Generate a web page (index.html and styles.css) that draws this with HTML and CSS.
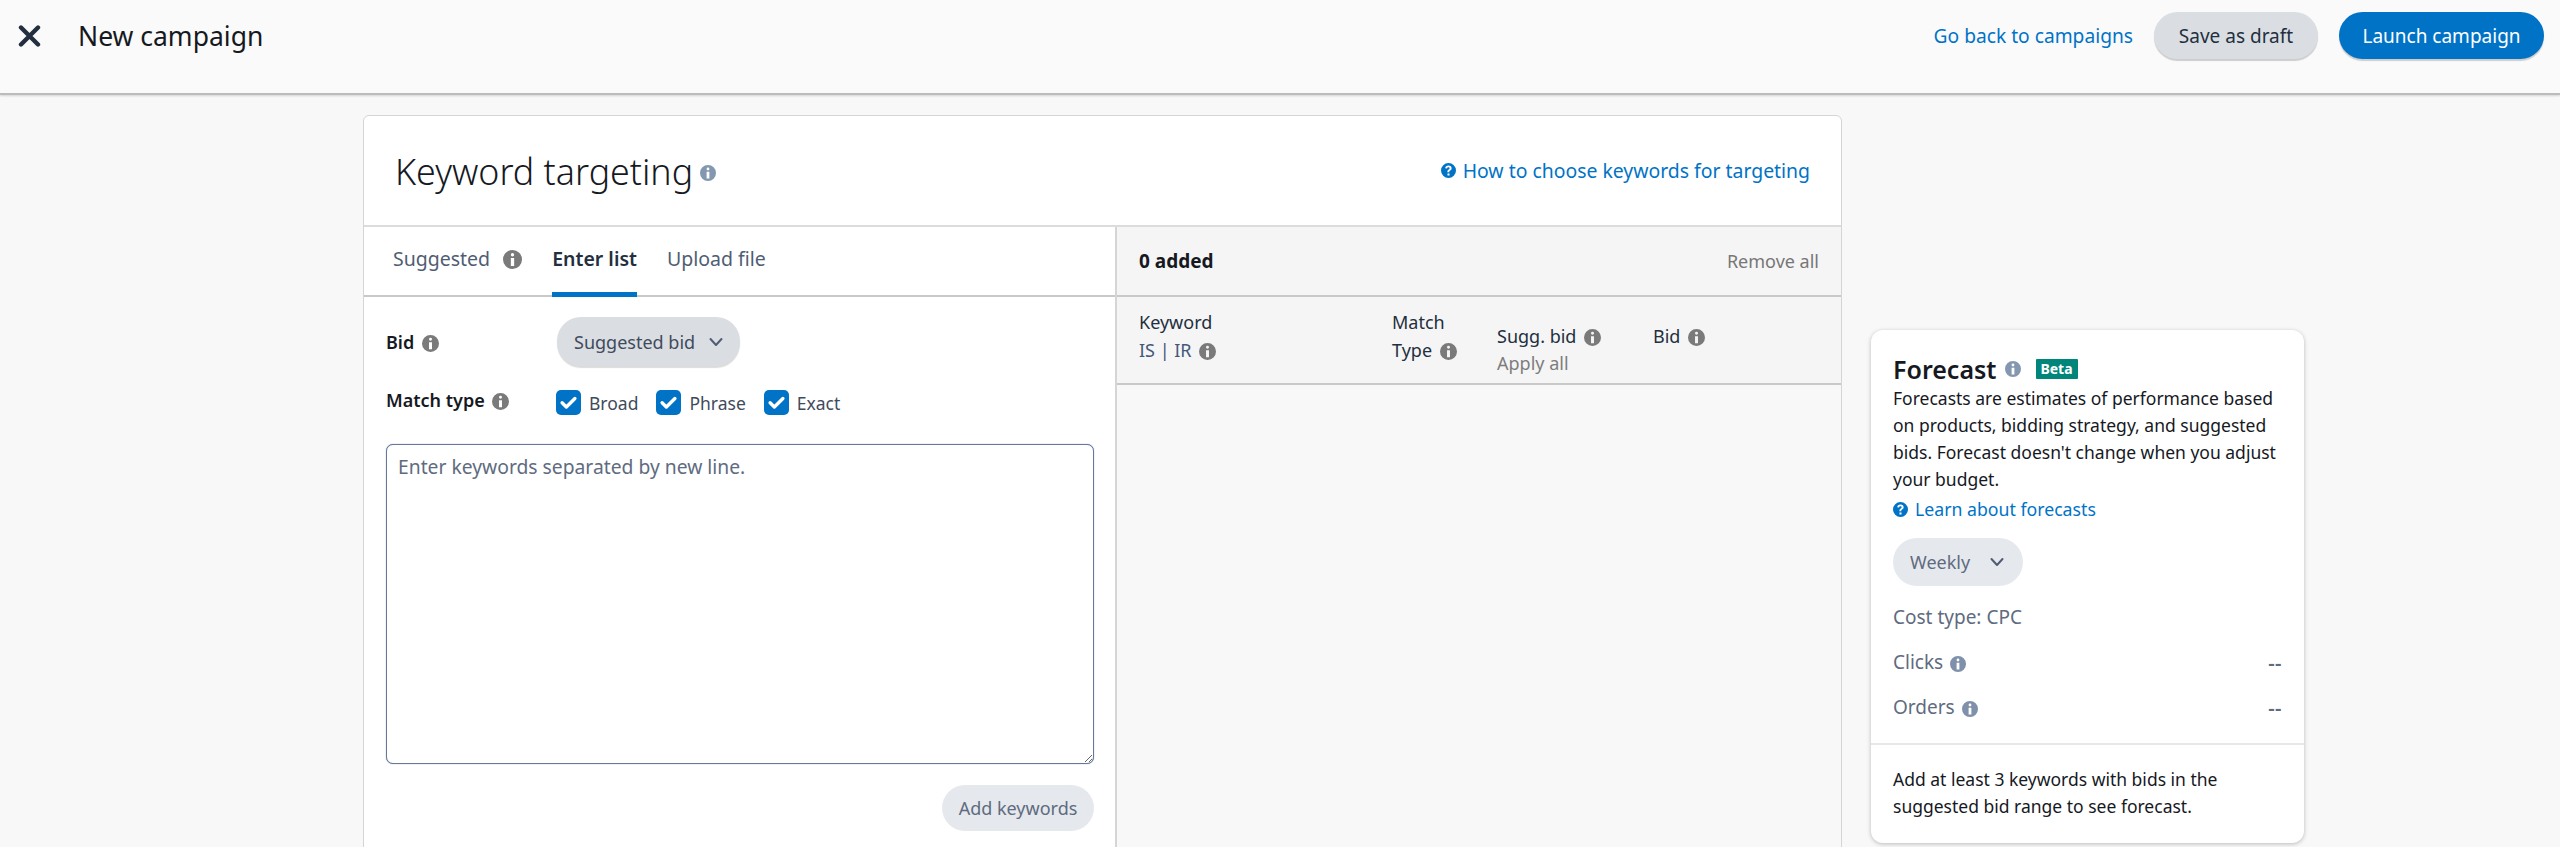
FILE: index.html
```html
<!DOCTYPE html>
<html lang="en">
<head>
<meta charset="utf-8">
<title>New campaign</title>
<link rel="stylesheet" href="styles.css">
</head>
<body>
<svg class="defs" width="0" height="0" aria-hidden="true">
  <symbol id="info" viewBox="0 0 16 16">
    <path fill="currentColor" fill-rule="evenodd" d="M8 0a8 8 0 1 1 0 16A8 8 0 0 1 8 0zM8 2.6a1.4 1.4 0 1 0 0 2.8 1.4 1.4 0 0 0 0-2.8zM6.6 6.8v6.6h2.8V6.8z"/>
  </symbol>
  <symbol id="help" viewBox="0 0 16 16">
    <path fill="currentColor" fill-rule="evenodd" d="M8 0a8 8 0 1 1 0 16A8 8 0 0 1 8 0zM6.9 11.2v2.2h2.2v-2.2zM8 2.6c-2 0-3.3 1.1-3.5 3l2 .3c.1-.9.6-1.4 1.4-1.4.8 0 1.3.4 1.3 1.1 0 .6-.3.9-1 1.4-.9.6-1.4 1.2-1.4 2.3v.5h2v-.3c0-.6.2-.9.9-1.4 1-.7 1.6-1.4 1.6-2.6 0-1.8-1.2-2.9-3.3-2.9z"/>
  </symbol>
  <symbol id="chev" viewBox="0 0 16 16">
    <path fill="none" stroke="currentColor" stroke-width="2" stroke-linecap="round" stroke-linejoin="round" d="M2.5 5l5.5 6 5.5-6"/>
  </symbol>
  <symbol id="check" viewBox="0 0 16 16">
    <path fill="none" stroke="#fff" stroke-width="2.8" stroke-linecap="round" stroke-linejoin="round" d="M2.6 8.2l3.6 3.6L13.4 4.6"/>
  </symbol>
</svg>

<header class="topbar">
  <div class="topbar-left">
    <svg class="close" viewBox="0 0 22 22" aria-hidden="true"><path d="M2.5 2.5l17 17M19.5 2.5l-17 17" fill="none" stroke="#232f3e" stroke-width="4.4" stroke-linecap="round"/></svg>
    <span class="topbar-title">New campaign</span>
  </div>
  <div class="topbar-right">
    <a class="link back-link">Go back to campaigns</a>
    <button class="btn btn-grey">Save as draft</button>
    <button class="btn btn-blue">Launch campaign</button>
  </div>
</header>

<main class="page">
  <section class="card">
    <div class="card-head">
      <div class="heading">
        <h1>Keyword targeting</h1>
        <svg class="ic ic-head"><use href="#info"/></svg>
      </div>
      <a class="link help-link"><svg class="ic ic-help"><use href="#help"/></svg>How to choose keywords for targeting</a>
    </div>
    <div class="columns">
      <div class="col-left">
        <nav class="tabs">
          <span class="tab">Suggested <svg class="ic ic-tab"><use href="#info"/></svg></span>
          <span class="tab tab-active">Enter list</span>
          <span class="tab">Upload file</span>
        </nav>
        <div class="form">
          <div class="form-row row-bid">
            <div class="form-label">Bid <svg class="ic ic-grey"><use href="#info"/></svg></div>
            <button class="select select-bid">Suggested bid <svg class="chev"><use href="#chev"/></svg></button>
          </div>
          <div class="form-row row-match">
            <div class="form-label">Match type <svg class="ic ic-grey"><use href="#info"/></svg></div>
            <div class="checks">
              <label class="check"><svg class="box" viewBox="0 0 16 16"><use href="#check"/></svg>Broad</label>
              <label class="check"><svg class="box" viewBox="0 0 16 16"><use href="#check"/></svg>Phrase</label>
              <label class="check"><svg class="box" viewBox="0 0 16 16"><use href="#check"/></svg>Exact</label>
            </div>
          </div>
          <textarea class="keywords" placeholder="Enter keywords separated by new line."></textarea>
          <div class="form-foot"><button class="btn-add">Add keywords</button></div>
        </div>
      </div>
      <div class="col-right">
        <div class="added">
          <strong>0 added</strong>
          <span class="remove">Remove all</span>
        </div>
        <div class="thead">
          <div class="th th-keyword"><div>Keyword</div><div class="sub-blue">IS | IR <svg class="ic ic-grey"><use href="#info"/></svg></div></div>
          <div class="th th-match"><div>Match</div><div>Type <svg class="ic ic-grey"><use href="#info"/></svg></div></div>
          <div class="th th-sugg"><div>Sugg. bid <svg class="ic ic-grey"><use href="#info"/></svg></div><div class="sub-grey">Apply all</div></div>
          <div class="th th-bid"><div>Bid <svg class="ic ic-grey"><use href="#info"/></svg></div></div>
        </div>
        <div class="tbody"></div>
      </div>
    </div>
  </section>

  <aside class="forecast">
    <div class="fc-body">
      <div class="fc-title">
        <h2>Forecast</h2>
        <svg class="ic ic-fc-title"><use href="#info"/></svg>
        <span class="beta">Beta</span>
      </div>
      <p class="fc-text">Forecasts are estimates of performance based on products, bidding strategy, and suggested bids. Forecast doesn't change when you adjust your budget.</p>
      <a class="link fc-learn"><svg class="ic ic-learn"><use href="#help"/></svg>Learn about forecasts</a>
      <button class="select select-weekly">Weekly <svg class="chev"><use href="#chev"/></svg></button>
      <div class="fc-line fc-cost">Cost type: CPC</div>
      <div class="fc-line fc-metric"><span>Clicks <svg class="ic ic-fc"><use href="#info"/></svg></span><span class="dash">--</span></div>
      <div class="fc-line fc-metric"><span>Orders <svg class="ic ic-fc"><use href="#info"/></svg></span><span class="dash">--</span></div>
    </div>
    <p class="fc-foot">Add at least 3 keywords with bids in the suggested bid range to see forecast.</p>
  </aside>
</main>
</body>
</html>
```

FILE: styles.css
```css
* { box-sizing: border-box; }
html, body { margin: 0; padding: 0; }
body {
  height: 847px;
  overflow: hidden;
  background: #f8f8f8;
  font-family: "Noto Sans", "Open Sans", sans-serif;
  color: #16191f;
  font-size: 19px;
}
.defs { position: absolute; }
button { font-family: inherit; border: 0; cursor: pointer; }
h1, h2, p { margin: 0; font-weight: inherit; }
.ic { display: inline-block; vertical-align: -2px; }
.link { color: #0073c7; text-decoration: none; }

.topbar {
  height: 95px;
  padding: 12px 16px 0 18px;
  display: flex;
  justify-content: space-between;
  align-items: flex-start;
  background: #fafafa;
  border-bottom: 2px solid #bcbcbc;
  box-shadow: 0 1px 2px rgba(0,0,0,.15);
}
.topbar-left { display: flex; align-items: center; height: 47px; gap: 37px; }
.close { width: 23px; height: 22px; }
.topbar-title { font-size: 26.5px; color: #16191f; }
.topbar-right { display: flex; align-items: center; height: 47px; }
.back-link { font-size: 19.2px; margin-right: 21px; }
.btn {
  height: 47px;
  border-radius: 24px;
  font-size: 19px;
  padding: 0;
  box-shadow: 0 2px 1px rgba(0,0,0,.18);
}
.btn-grey { width: 164px; background: #dadee3; color: #232f3e; margin-right: 21px; }
.btn-blue { width: 205px; background: #0073c7; color: #fff; }

.page {
  display: flex;
  align-items: flex-start;
  height: 752px;
  overflow: hidden;
  padding: 20px 0 0 363px;
}
.card {
  width: 1479px;
  height: 800px;
  flex: none;
  background: #fff;
  border: 1px solid #d5d5d5;
  border-radius: 6px;
}
.card-head {
  height: 111px;
  padding: 0 31px 0 31px;
  display: flex;
  justify-content: space-between;
  align-items: center;
  border-bottom: 2px solid #dcdcdc;
}
.heading { display: flex; align-items: center; gap: 7px; }
.heading h1 { font-size: 35.8px; font-weight: 300; color: #16191f; }
.ic-head { width: 16px; height: 16px; color: #8497b0; margin-top: 4px; }
.help-link { font-size: 19.4px; display: flex; align-items: center; gap: 7px; }
.ic-help { width: 15px; height: 15px; }

.columns { display: flex; height: 690px; }
.col-left { width: 753px; border-right: 2px solid #d5d5d5; }
.col-right { flex: 1; background: #f8f8f8; }

.tabs {
  height: 70px;
  padding: 0 0 0 29px;
  display: flex;
  gap: 30px;
  border-bottom: 2px solid #c9c9c9;
}
.tab { height: 70px; line-height: 63px; font-size: 19.5px; color: #4f5d73; flex: none; }
.ic-tab { width: 19px; height: 19px; margin-left: 8px; color: #7a7a7a; vertical-align: -3px; }
.tab-active { font-weight: 600; color: #232f3e; border-bottom: 5px solid #0073c7; height: 70px; }

.form { padding: 20px 21px 0 22px; }
.form-row { display: flex; align-items: center; }
.row-bid { height: 49px; }
.row-match { margin-top: 16px; height: 36px; }
.form-label { width: 171px; font-size: 18px; font-weight: 600; color: #16191f; flex: none; }
.ic-grey { width: 17px; height: 17px; color: #7a7a7a; margin-left: 3px; vertical-align: -3px; }
.select {
  display: inline-flex;
  align-items: center;
  background: #dadee3;
  color: #3f4b5c;
  font-size: 18px;
  border-radius: 24px;
  white-space: nowrap;
}
.select-bid { width: 183px; height: 49px; padding: 0 16px 0 17px; box-shadow: 0 2px 1px rgba(0,0,0,.14); justify-content: space-between; }
.chev { width: 16px; height: 16px; color: #4f5d73; }
.checks { display: flex; gap: 18px; margin-left: -1px; margin-top: 5px; }
.check { display: flex; align-items: center; gap: 8px; font-size: 17.5px; color: #3f4b5c; }
.box { width: 25px; height: 25px; padding: 3px; background: #0073c7; border-radius: 5px; }
.keywords {
  display: block;
  width: 708px;
  height: 320px;
  margin-top: 26px;
  padding: 9px 11px;
  border: 1px solid #66799a;
  box-shadow: 0 0 1px #66799a;
  border-radius: 7px;
  font: 19.3px/26px "Noto Sans", "Open Sans", sans-serif;
  color: #16191f;
  background: #fff;
  outline: 0;
}
.keywords::placeholder { color: #5e6b80; opacity: 1; }
.form-foot { display: flex; justify-content: flex-end; margin-top: 21px; }
.btn-add {
  width: 152px;
  height: 46px;
  border-radius: 23px;
  background: #e5e8ec;
  color: #5e6b80;
  font-size: 18px;
  padding: 0;
}

.added {
  height: 70px;
  padding: 0 22px;
  display: flex;
  justify-content: space-between;
  align-items: center;
  border-bottom: 2px solid #c9c9c9;
  background: #f5f5f5;
  font-size: 19px;
}
.added strong { font-weight: 700; }
.remove { color: #777; font-size: 18px; }
.thead {
  height: 88px;
  display: flex;
  align-items: flex-start;
  padding: 11px 0 0 22px;
  background: #f5f5f5;
  border-bottom: 2px solid #c9c9c9;
  font-size: 18px;
  line-height: 28px;
}
.th { flex: none; color: #232f3e; }
.th-keyword { width: 253px; }
.th-match { width: 105px; }
.th-sugg { width: 156px; margin-top: 14px; }
.th-bid { margin-top: 14px; }
.sub-blue { color: #44587a; }
.sub-grey { color: #7d7d7d; margin-top: -1px; }

.forecast {
  width: 433px;
  flex: none;
  margin: 215px 0 0 29px;
  background: #fff;
  border-radius: 12px;
  box-shadow: 0 1px 4px rgba(0,0,0,.25);
  height: 513px;
}
.fc-body { padding: 24px 22px 0 22px; height: 415px; border-bottom: 2px solid #e8e8e8; }
.fc-title { display: flex; align-items: center; height: 30px; }
.fc-title h2 { font-size: 25px; font-weight: 600; }
.ic-fc-title { width: 16px; height: 16px; color: #8497b0; margin-left: 8px; }
.beta { margin-left: 15px; width: 42px; height: 20px; background: #00857a; color: #fff; font-size: 14px; font-weight: 700; text-align: center; line-height: 20px; border-radius: 1px; }
.fc-text { margin-top: 1px; font-size: 17.5px; line-height: 27px; width: 389px; }
.fc-learn { display: flex; align-items: center; gap: 7px; margin-top: 3px; font-size: 17.7px; line-height: 27px; }
.ic-learn { width: 15px; height: 15px; }
.select-weekly { width: 130px; height: 48px; margin-top: 15px; background: #e5e8ec; color: #5e6b80; padding: 0 18px 0 17px; justify-content: space-between; }
.fc-line { color: #5e6b80; font-size: 19px; line-height: 27px; margin-top: 18px; }
.fc-cost { margin-top: 18px; }
.fc-metric { display: flex; justify-content: space-between; }
.dash { font-weight: 600; font-size: 20px; letter-spacing: .5px; }
.ic-fc { width: 16px; height: 16px; color: #7f90aa; margin-left: 2px; vertical-align: -3px; }
.fc-foot { padding: 21px 22px 0; font-size: 17.5px; line-height: 27px; }
```
